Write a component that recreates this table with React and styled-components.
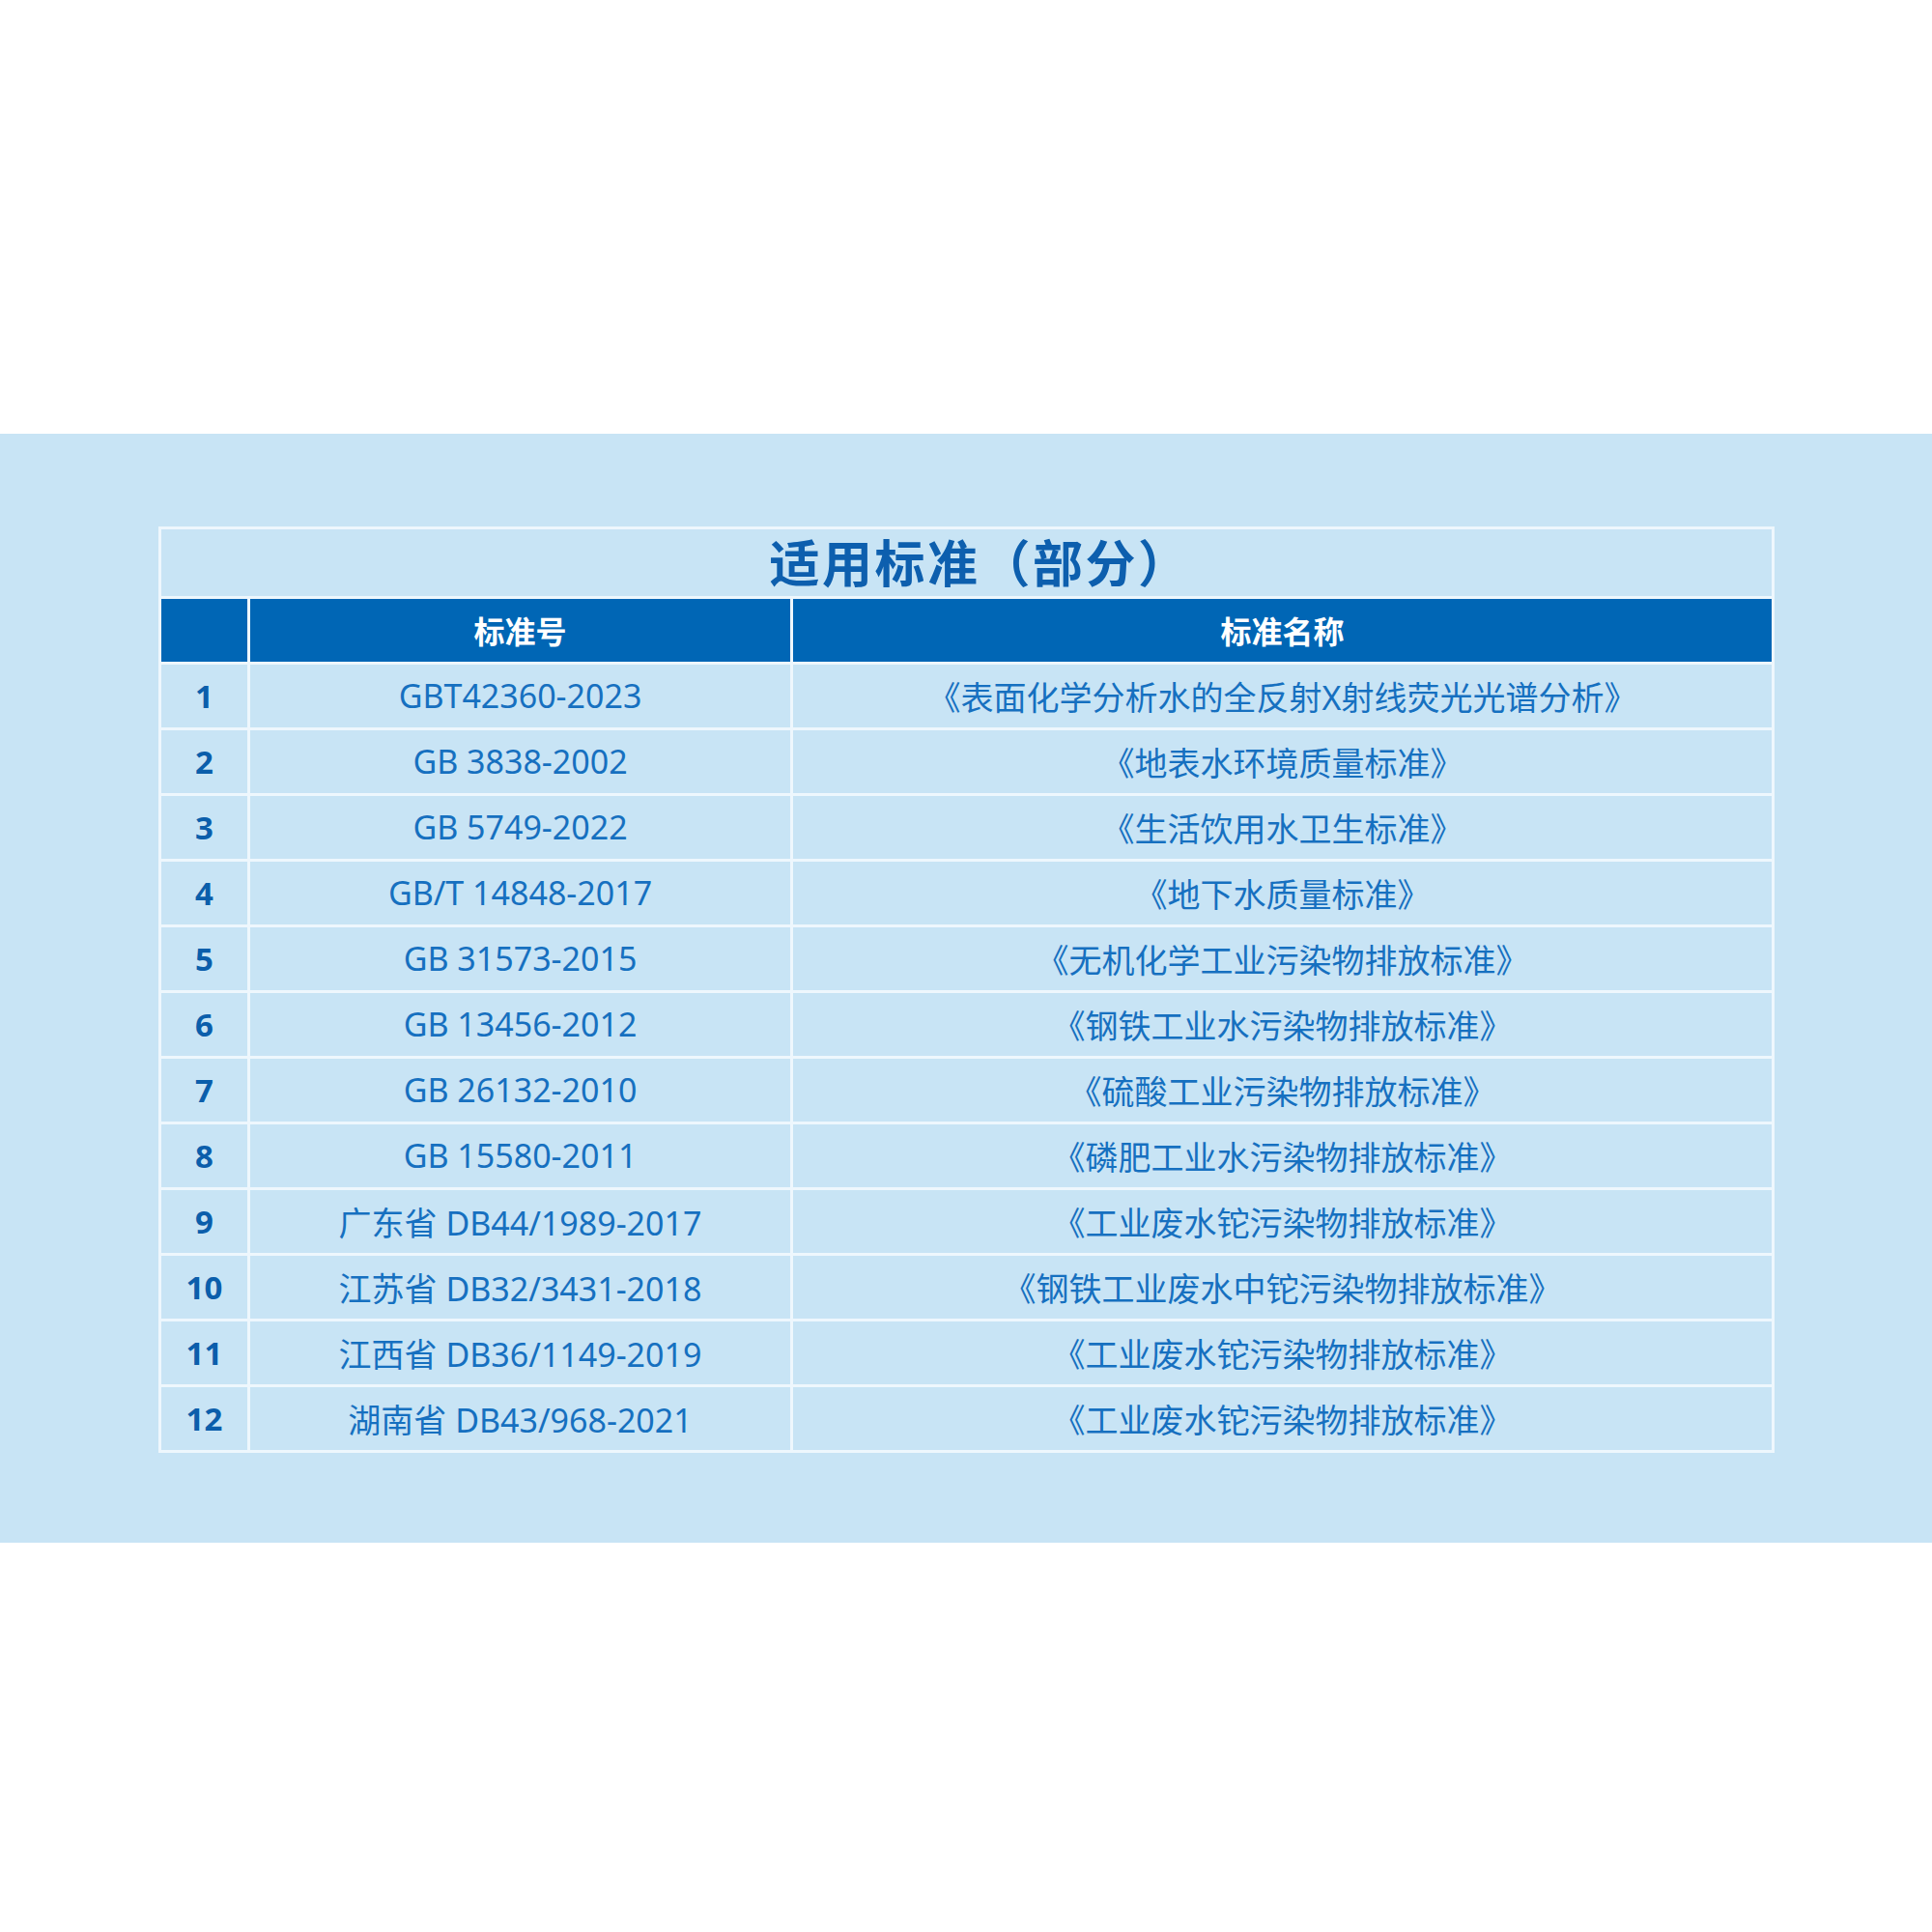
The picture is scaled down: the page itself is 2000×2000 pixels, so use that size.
import React from 'react';
import styled, { createGlobalStyle } from 'styled-components';

const GlobalStyle = createGlobalStyle`
  html, body {
    margin: 0;
    padding: 0;
    background: #ffffff;
  }
  body {
    font-family: "Noto Sans", "Noto Sans CJK SC", sans-serif;
  }
`;

const Page = styled.div`
  width: 2000px;
  height: 2000px;
  background: #ffffff;
  padding-top: 449px;
  box-sizing: border-box;
`;

const Band = styled.section`
  height: 1148px;
  background: #c8e4f5;
  padding: 96px 163px 0 164px;
  box-sizing: border-box;
`;

const Table = styled.div`
  border-top: 3px solid #eef7fd;
  border-left: 3px solid #eef7fd;
  border-right: 3px solid #eef7fd;
`;

const TitleRow = styled.div`
  height: 72px;
  display: flex;
  align-items: center;
  justify-content: center;
  border-bottom: 3px solid #eef7fd;
  color: #0d5fae;
  font-family: "Noto Sans CJK SC", sans-serif;
  font-weight: 700;
  font-size: 52px;
  letter-spacing: 2.5px;
  padding-left: 28px;
  padding-bottom: 4px;
  box-sizing: border-box;
`;

const Row = styled.div`
  display: grid;
  grid-template-columns: 92px 562px 1fr;
  height: 65px;
  border-bottom: 3px solid #eef7fd;
  background: ${(p) => (p.head ? '#0066b5' : 'transparent')};
`;

const Cell = styled.div`
  display: flex;
  align-items: center;
  justify-content: center;
  border-right: ${(p) => (p.last ? 'none' : '3px solid #eef7fd')};
  white-space: nowrap;
  font-family: "Noto Sans", "Noto Sans CJK SC", sans-serif;
  font-size: 34px;
  color: #1670c0;
  padding-bottom: 1px;
`;

const HeadCell = styled(Cell)`
  color: #ffffff;
  font-weight: 700;
  font-size: 32px;
  font-family: "Noto Sans CJK SC", sans-serif;
`;

const NumCell = styled(Cell)`
  font-weight: 700;
  color: #0b5eab;
  font-size: 33px;
`;

const rows = [
  ['GBT42360-2023', '《表面化学分析水的全反射X射线荧光光谱分析》'],
  ['GB 3838-2002', '《地表水环境质量标准》'],
  ['GB 5749-2022', '《生活饮用水卫生标准》'],
  ['GB/T 14848-2017', '《地下水质量标准》'],
  ['GB 31573-2015', '《无机化学工业污染物排放标准》'],
  ['GB 13456-2012', '《钢铁工业水污染物排放标准》'],
  ['GB 26132-2010', '《硫酸工业污染物排放标准》'],
  ['GB 15580-2011', '《磷肥工业水污染物排放标准》'],
  ['广东省 DB44/1989-2017', '《工业废水铊污染物排放标准》'],
  ['江苏省 DB32/3431-2018', '《钢铁工业废水中铊污染物排放标准》'],
  ['江西省 DB36/1149-2019', '《工业废水铊污染物排放标准》'],
  ['湖南省 DB43/968-2021', '《工业废水铊污染物排放标准》'],
];

export default function App() {
  return (
    <Page>
      <GlobalStyle />
      <Band>
        <Table>
          <TitleRow>适用标准（部分）</TitleRow>
          <Row head>
            <HeadCell />
            <HeadCell>标准号</HeadCell>
            <HeadCell last>标准名称</HeadCell>
          </Row>
          {rows.map(([code, name], i) => (
            <Row key={i}>
              <NumCell>{i + 1}</NumCell>
              <Cell>{code}</Cell>
              <Cell last>{name}</Cell>
            </Row>
          ))}
        </Table>
      </Band>
    </Page>
  );
}
